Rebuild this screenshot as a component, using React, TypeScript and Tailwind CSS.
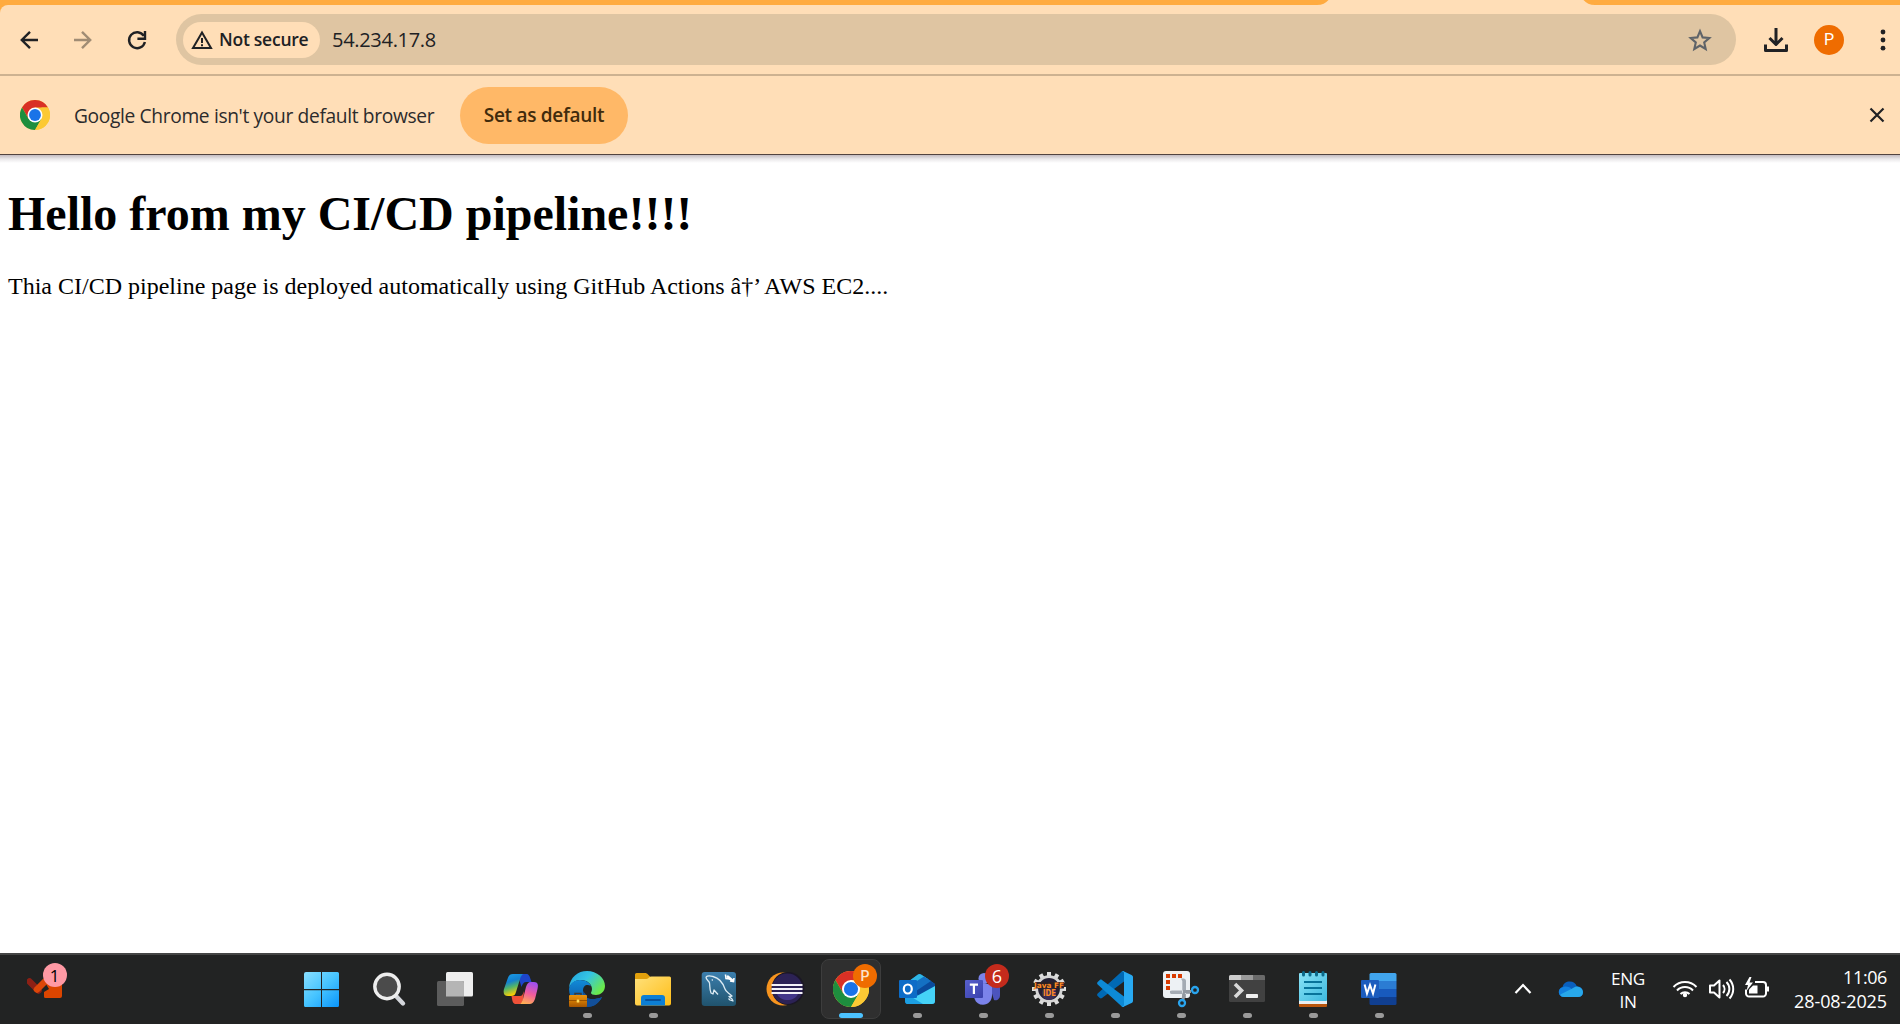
import type { ReactNode } from "react";

function Icon({ children, dot = false, className = "" }: { children: ReactNode; dot?: boolean; className?: string }) {
  return (
    <div className={"relative flex h-[60px] w-[60px] shrink-0 flex-col items-center rounded-lg pt-3 " + className}>
      <svg width="36" height="36" viewBox="0 0 36 36" className="overflow-visible">
        {children}
      </svg>
      {dot && <div className="mt-[6px] h-[5px] w-[9px] rounded-full bg-[#9a9a9a]" />}
    </div>
  );
}

function ChromeMark({ size }: { size: number }) {
  return (
    <svg width={size} height={size} viewBox="0 0 36 36">
      <ChromeShape />
    </svg>
  );
}

function ChromeShape() {
  return (
    <g>
      <circle cx="18" cy="18" r="18" fill="#fcc934" />
      <path d="M18 9h15.59A18 18 0 0 0 2.41 9L10.2 22.5Z" fill="#d93025" />
      <path d="M2.41 9A18 18 0 0 0 18 36l7.8-13.5L18 18 10.2 22.5Z" fill="#1e8e3e" />
      <path d="M33.59 9A18 18 0 0 1 18 36l7.8-13.5L25.8 9Z" fill="#fcc934" />
      <circle cx="18" cy="18" r="9" fill="#fff" />
      <circle cx="18" cy="18" r="7.1" fill="#1a73e8" />
    </g>
  );
}

function Toolbar() {
  return (
    <div className="flex h-[69px] items-center rounded-tl-lg bg-[#ffdeb7]">
      <svg width="176" height="69" viewBox="0 0 176 69" fill="none" strokeWidth="2.4" className="shrink-0">
        <path d="M38 35H22M30 26.800l-8.200 8.200 8.200 8.200" stroke="#202124" />
        <path d="M74 35h16M82 26.800l8.200 8.200-8.200 8.200" stroke="#a08c74" />
        <path d="M143.800 30.800A8 8 0 1 0 144.900 37M145 26v7.700h-7.600" stroke="#202124" />
      </svg>
      <div className="flex h-[51px] w-[1560px] shrink-0 items-center rounded-full bg-[#dfc5a2] pl-[7px]">
        <div className="flex h-9 w-[137px] items-center rounded-full bg-[#ffdeb7] pl-2">
          <svg width="22" height="20" viewBox="0 0 22 20" fill="none" stroke="#202124" strokeWidth="2">
            <path d="M11 2.500 2 18h18Z" />
            <path d="M11 8v5M11 14.200v2" />
          </svg>
          <span className="ml-[6px] text-[17.5px] leading-none font-semibold tracking-[-0.25px] whitespace-nowrap text-[#202124]">Not secure</span>
        </div>
        <span className="ml-[12px] text-[20px] leading-none tracking-[-0.3px] text-[#202124]">54.234.17.8</span>
        <svg width="26" height="26" viewBox="0 0 26 26" fill="none" stroke="#5f6368" strokeWidth="2.1" className="mr-[23px] ml-auto">
          <path d="M13 4.200l2.600 6.200 6.700.600-5.100 4.400 1.500 6.600-5.700-3.500-5.700 3.500 1.500-6.600-5.100-4.400 6.700-.600Z" />
        </svg>
      </div>
      <svg width="26" height="26" viewBox="0 0 26 26" fill="none" stroke="#202124" strokeWidth="3" className="ml-[27px]">
        <path d="M13 1v16M6.500 11l6.500 6.500 6.500-6.500M2.500 17.500V23.500h21V17.500" strokeLinejoin="round" />
      </svg>
      <div className="ml-[25px] flex h-[30px] w-[30px] items-center justify-center rounded-full bg-[#ef6c00] font-[Roboto] text-[16px] text-white">P</div>
      <svg width="10" height="30" viewBox="0 0 10 30" className="ml-[34px]" fill="#202124">
        <circle cx="5" cy="7" r="2.400" />
        <circle cx="5" cy="15" r="2.400" />
        <circle cx="5" cy="23.200" r="2.400" />
      </svg>
    </div>
  );
}

function InfoBar() {
  return (
    <div className="relative flex h-[81px] shrink-0 items-center border-t-2 border-b border-t-[#cdb291] border-b-[#51433f] bg-[#ffdeb7] pl-5">
      <ChromeMark size={30} />
      <span className="mt-[2px] ml-6 w-[386px] text-[19.2px] tracking-[-0.35px] whitespace-nowrap text-[#2c2b2c]">Google Chrome isn't your default browser</span>
      <div className="flex h-[57px] w-[168px] items-center justify-center rounded-full bg-[#ffb867] pt-px text-[19px] font-semibold tracking-[-0.3px] whitespace-nowrap text-[#412b0c]">
        Set as default
      </div>
      <svg width="16" height="16" viewBox="0 0 16 16" stroke="#202124" strokeWidth="2.2" className="mr-[15px] ml-auto">
        <path d="M1.500 1.500l13 13M14.500 1.500l-13 13" />
      </svg>
      <div className="absolute top-full left-0 mt-px h-[8px] w-full bg-linear-to-b from-[#c3bcc1] via-[#eae8ea] to-white" />
    </div>
  );
}

function Gradients() {
  return (
    <svg width="0" height="0" className="absolute">
      <defs>
        <linearGradient id="win" gradientUnits="userSpaceOnUse" x1="0" y1="0" x2="34" y2="36">
          <stop stopColor="#89dfff" /><stop offset=".5" stopColor="#46c4ff" /><stop offset="1" stopColor="#0a95fb" />
        </linearGradient>
        <linearGradient id="cpA" x1="0" y1="0" x2=".3" y2="1">
          <stop stopColor="#1ba0ea" /><stop offset=".4" stopColor="#1480cf" /><stop offset=".65" stopColor="#52b46a" /><stop offset="1" stopColor="#ffd000" />
        </linearGradient>
        <linearGradient id="cpB" x1=".6" y1="0" x2=".3" y2="1">
          <stop stopColor="#a050ee" /><stop offset=".5" stopColor="#f25c9c" /><stop offset="1" stopColor="#ffb152" />
        </linearGradient>
        <linearGradient id="edge" x1="0" y1="0" x2="1" y2=".6">
          <stop stopColor="#1f9fdd" /><stop offset=".5" stopColor="#35c5e4" /><stop offset="1" stopColor="#6be94a" />
        </linearGradient>
        <linearGradient id="edgeB" x1="0" y1="0" x2="0" y2="1">
          <stop stopColor="#118bd8" /><stop offset="1" stopColor="#0b4c9b" />
        </linearGradient>
        <linearGradient id="folder" x1="0" y1="0" x2="1" y2="1">
          <stop stopColor="#ffe17b" /><stop offset="1" stopColor="#ffbd17" />
        </linearGradient>
        <linearGradient id="sql" x1="0" y1="0" x2="0" y2="1">
          <stop stopColor="#3c7fae" /><stop offset="1" stopColor="#20536d" />
        </linearGradient>
        <linearGradient id="teams" x1="0" y1="0" x2="1" y2="1">
          <stop stopColor="#5860cc" /><stop offset="1" stopColor="#3940ac" />
        </linearGradient>
        <linearGradient id="note" x1="0" y1="0" x2="1" y2="1">
          <stop stopColor="#8ae3f6" /><stop offset="1" stopColor="#3db9df" />
        </linearGradient>
        <linearGradient id="briefcase" x1="0" y1="0" x2="0" y2="1">
          <stop stopColor="#e9920d" /><stop offset=".45" stopColor="#d27c04" /><stop offset="1" stopColor="#a55500" />
        </linearGradient>
      </defs>
    </svg>
  );
}

const teeth = [0, 30, 60, 90, 120, 150, 180, 210, 240, 270, 300, 330];

function Apps() {
  return (
    <div className="ml-[218px] flex gap-[6px] pt-1">
      <Icon>
        <g fill="url(#win)">
          <path d="M1 1h15v17H-1V3a2 2 0 0 1 2-2ZM17 1h15.500a1.500 1.500 0 0 1 1.500 1.500V18H17ZM-1 19.200h17V36H.5A1.500 1.500 0 0 1-1 34.500ZM17 19.200h17v15.300a1.500 1.500 0 0 1-1.500 1.500H17Z" />
        </g>
      </Icon>
      <Icon>
        <path d="M25 25l7 7.500" stroke="#d3d5da" strokeWidth="4.400" strokeLinecap="round" />
        <circle cx="16" cy="15.500" r="12.200" fill="#4b4b4b" stroke="#eeeeee" strokeWidth="3.400" />
      </Icon>
      <Icon>
        <rect x="9" y="1" width="27" height="24.500" rx="1.500" fill="#eeeeee" />
        <rect x="0" y="10" width="27" height="25" rx="1.500" fill="#5c5c5c" />
        <path d="M9 10h16.500a1.500 1.500 0 0 1 1.500 1.500v14H9Z" fill="#b5b5b5" />
      </Icon>
      <Icon>
        <path d="M16 3h7c3 0 3.500 2 4.500 5l1 3h-5c-3 0-4 2-5 5L16 8Z" fill="#1d45cb" />
        <path d="M11 25h6c2 0 3-2 4-5l-1 9c-1 3-1 4-4 4h-3c-3 0-3.500-2-4.500-8Z" fill="#ef5138" />
        <path d="M10 3h11c-2 0-3 2-4 5l-4 13c-1 3-2 4-5 4H5c-4 0-5-3-4-7L4.500 8C6 4 7 3 10 3Z" fill="url(#cpA)" />
        <path d="M26 33H16c2 0 3-2 4-5l3-12c1-3 2-5 5-5h3c4 0 4.500 3 3.500 7L32 28c-1.500 4-3 5-6 5Z" fill="url(#cpB)" />
      </Icon>
      <Icon dot>
        <path d="M0 17C1 6 9 0 18 0c10 0 18 7 18 15 0 6-5 9-9 9-3 0-5-1-5-2 0-1 1-2 1-4 0-5-5-9-11-9C6 9 2 12 0 17Z" fill="url(#edge)" />
        <path d="M0 18C1 12 6 9 11 9c6 0 10 3 11 6-4-2-8-1-8 5 0 6 6 9 12 8 3-.5 5-1 7-2-3 6-8 10-15 10C8 36 0 28 0 18Z" fill="url(#edgeB)" />
        <path d="M14 20c0 6 6 9 12 8 3-.500 5-1 7-2-3 6-8 10-15 10V25Z" fill="#124f99" />
        <path d="M6 24v-1.500h6V24" fill="none" stroke="#3b3b3b" strokeWidth="1.500" />
        <rect x="0" y="24" width="18" height="12" rx="1" fill="url(#briefcase)" />
        <path d="M0 29.500h18" stroke="#8a4700" strokeWidth=".8" />
        <rect x="7.700" y="28.500" width="2.600" height="3" rx=".5" fill="#ffd95a" />
      </Icon>
      <Icon dot>
        <path d="M0 3.500A1.500 1.500 0 0 1 1.500 2H10c1.500 0 2 .5 3 1.500L15.500 6 10 12H0Z" fill="#e2a00c" />
        <path d="M0 8h10c2 0 3-.500 4-1.500.700-.700 1.500-1 2.500-1h18A1.500 1.500 0 0 1 36 7v25.500a2 2 0 0 1-2 2H2a2 2 0 0 1-2-2Z" fill="url(#folder)" />
        <path d="M6 34.500V27a3 3 0 0 1 3-3h18a3 3 0 0 1 3 3v7.500Z" fill="#0c7fd5" />
        <path d="M11 29h14" stroke="#07519b" strokeWidth="2" strokeLinecap="round" />
      </Icon>
      <Icon>
        <rect x=".700" y="1" width="34.300" height="34" rx="3" fill="url(#sql)" />
        <path d="M5 6c2-2 5-1 7-.500C18 7 22 12 24 18c.500 2 2 3 4 4.500l3 2.500-3 .500 3 2.500 1 2-3-1-1.500-1.500M5 6c0 3 3 4 3.500 6 .5 3 0 7 1.500 10l2 1 1-4 4 4.500" fill="none" stroke="#dcebf3" strokeWidth="1.300" strokeLinejoin="round" />
        <circle cx="11.300" cy="9" r=".7" fill="#fff" />
        <path d="M26 5l6 5" stroke="#fff" strokeWidth="2.600" />
        <path d="M24.500 3.500l.5 4 4 .5M29 10l3.500.5.500-3.500" fill="none" stroke="#fff" strokeWidth="1.600" />
      </Icon>
      <Icon>
        <circle cx="16" cy="18" r="16.500" fill="#f7941e" />
        <circle cx="21" cy="17.500" r="16.500" fill="#1b1726" />
        <circle cx="20.300" cy="17.700" r="15.300" fill="#2c2255" />
        <path d="M10 23h21c-2 4-6 6-10.500 6S12 27 10 23Z" fill="#43368a" />
        <path d="M4.500 14h31M4.500 18h31M4.500 22h31" stroke="#f4f2f8" strokeWidth="2" />
      </Icon>
      <div className="relative flex h-[60px] w-[60px] flex-col items-center rounded-lg border border-[#3d3d3d] bg-[#2f2f2f] pt-[11px]">
        <ChromeMark size={36} />
        <div className="mt-[6px] h-[5px] w-6 shrink-0 rounded-full bg-[#4cc2ff]" />
        <div className="absolute top-1 left-[31px] flex h-6 w-6 items-center justify-center rounded-full bg-[#ef6c00] font-[Roboto] text-[14px] font-medium text-[#fbe2cd]">P</div>
      </div>
      <Icon dot>
        <path d="M6 13 19 3.500c1-.700 2-.700 3 0L36 13v17a3 3 0 0 1-3 3H9a3 3 0 0 1-3-3Z" fill="#0f6cbd" />
        <path d="M6 13 19 3.500c1-.700 2-.700 3 0l7 4.500-17 13-6-4Z" fill="#2fb7e5" />
        <path d="M29 8l7 5v4L22 25l-10-4Z" fill="#0a4a9c" />
        <path d="M25 5.500l7 4.500-18 12-4-7Z" fill="#1470c3" />
        <path d="M36 15v15a3 3 0 0 1-3 3H9c-1 0-2-1-2-2Z" fill="#45d2f7" />
        <path d="M6 22l18 11H9a3 3 0 0 1-3-3Z" fill="#1c9fe3" />
        <rect x="0" y="9" width="18" height="18" rx="1" fill="#0d6cc7" />
        <ellipse cx="8.800" cy="18" rx="4" ry="4.500" fill="none" stroke="#fff" strokeWidth="2.200" />
      </Icon>
      <div className="relative">
        <Icon dot>
          <circle cx="30" cy="9" r="4" fill="#4d55b9" />
          <path d="M24 13h11v11c0 4-3 6-6 5Z" fill="#4c54bd" />
          <circle cx="19" cy="7.500" r="5.500" fill="#7b83eb" />
          <path d="M10 13h17v11c0 6-4 9.700-9 9.700-4 0-7-2-8.500-6Z" fill="#7b83eb" />
          <rect x="0" y="9" width="18" height="18" rx="1" fill="url(#teams)" />
          <path d="M4.800 13.700h8.200M8.900 13v10" stroke="#fff" strokeWidth="2.200" />
        </Icon>
        <div className="absolute top-[5px] left-[32px] flex h-6 w-6 items-center justify-center rounded-full bg-[#c42b1c] text-[18px] leading-none text-white">6</div>
      </div>
      <Icon dot>
        {teeth.map((a) => (
          <rect key={a} x="16" y="1" width="4" height="6" fill="#dddddd" transform={`rotate(${a} 18 18)`} />
        ))}
        <circle cx="18" cy="18" r="12.300" fill="#242032" stroke="#d5d5d5" strokeWidth="2.800" />
        <circle cx="18" cy="22" r="7" fill="#3a2d58" />
        <rect x="4" y="11" width="29" height="6.500" fill="#2b2024" />
        <g fill="#ff8a24" fontFamily="DejaVu Sans" fontWeight="700" textAnchor="middle">
          <text x="18" y="16.500" fontSize="7.400" textLength="30" lengthAdjust="spacingAndGlyphs">Java FF</text>
          <text x="18.500" y="24.700" fontSize="8.500" textLength="13" lengthAdjust="spacingAndGlyphs">IDE</text>
        </g>
      </Icon>
      <Icon dot>
        <path d="M27 0v10.500L5 27c-.800.600-1.500.500-2.200 0L.7 25c-.800-.800-.700-1.700 0-2.500L24.500.800C25.300.100 26 0 27 0Z" fill="#0069b4" />
        <path d="M27 36V25.500L5 9c-.800-.600-1.500-.500-2.200 0L.7 11c-.800.800-.700 1.700 0 2.500l23.800 21.700c.8.700 1.500.8 2.500.8Z" fill="#0d8ad6" />
        <path d="M26 0l8.500 4c1 .500 1.500 1.200 1.500 2.300v23.400c0 1.100-.500 1.800-1.500 2.300L26 36c-1 0-1.500-.200-2-.700 1.200.9 3 0 3-1.500V2.200C27 .700 25.200-.200 24 .700c.5-.500 1-.700 2-.700Z" fill="#28a9f1" />
      </Icon>
      <Icon dot>
        <rect x="0" y="0" width="27" height="27" rx="3" fill="#edf1f4" />
        <path d="M3 3h4v4H3ZM9 3h4v4H9ZM15 3h4v4h-4ZM3 9h4v4H3ZM3 15h4v4H3Z" fill="#d83b01" />
        <path d="M18 7.500h2.500c1.500 0 2.500 1 2.500 2.500v17h-3.700V10ZM7 20v1.500C7 22.500 8 23 9.500 23H27v-3.500H9Z" fill="#a5acb4" />
        <path d="M20 20.500l8 0M21 22l-1 7" stroke="#9299a1" strokeWidth="3" />
        <circle cx="32" cy="19" r="3" fill="none" stroke="#29a4ee" strokeWidth="2.300" />
        <circle cx="19" cy="32" r="3" fill="none" stroke="#29a4ee" strokeWidth="2.300" />
      </Icon>
      <Icon dot>
        <rect x="0" y="4" width="36" height="27" rx="1.500" fill="#414141" />
        <path d="M1.500 4H12v5H0V5.500A1.500 1.500 0 0 1 1.500 4Z" fill="#cccccc" />
        <path d="M12 4h12v5H12Z" fill="#9a9a9a" />
        <path d="M24 4h10.500A1.500 1.500 0 0 1 36 5.500V9H24Z" fill="#6a6a6a" />
        <path d="M6 13l6.500 6.500L6 26" fill="none" stroke="#d9d9d9" strokeWidth="3.600" />
        <rect x="17" y="23" width="12" height="4" rx=".8" fill="#f0f0f0" />
      </Icon>
      <Icon dot>
        <rect x="4" y="30" width="28" height="6" rx="1" fill="#b9560e" />
        <rect x="4" y="28" width="28" height="5" fill="#e9eef1" />
        <rect x="4" y="2" width="28" height="28" rx="1" fill="url(#note)" />
        <path d="M9 11h18M9 17h18M9 23h18" stroke="#08739a" strokeWidth="1.800" />
        <path d="M8.500 1.500v2.500M15 1.500v2.500M21.500 1.500v2.500M28 1.500v2.500" stroke="#0b6b8c" strokeWidth="3" strokeLinecap="round" />
      </Icon>
      <Icon dot>
        <path d="M10 2h24a1.500 1.500 0 0 1 1.500 1.500V10H8.500V3.500A1.500 1.500 0 0 1 10 2Z" fill="#41a5ee" />
        <path d="M8.500 10h27v8h-27Z" fill="#2b7cd3" />
        <path d="M8.500 18h27v8h-27Z" fill="#185abd" />
        <path d="M8.500 26h27v6.500A1.500 1.500 0 0 1 34 34H10a1.500 1.500 0 0 1-1.500-1.500Z" fill="#103f91" />
        <rect x="0" y="9" width="18" height="18" rx="1" fill="#1b5cbe" />
        <path d="M3.600 13.500l2.400 9 3-8.500 3 8.500 2.400-9" fill="none" stroke="#fff" strokeWidth="2" />
      </Icon>
    </div>
  );
}

function Tray() {
  return (
    <div className="mr-[13px] ml-auto flex items-start pt-[10px] text-[18px] leading-6 text-white">
      <svg width="74" height="30" viewBox="1513 974 74 30" fill="none" className="mt-[9px] shrink-0">
        <path d="M1515.500 993l7.500-8 7.500 8" stroke="#fff" strokeWidth="2.200" />
        <path d="M1564 997a5 5 0 0 1-1.500-9.800c.7-3.700 3.600-5.700 7.300-5.700 3.300 0 6 2 7 4.700 3.700.2 6.200 2.700 6.200 6 0 3-2 4.800-5 4.800Z" fill="#0a5fbd" />
        <path d="M1564 997a5 5 0 0 1-.500-10c3-1 5.500 0 7.500 1.300l4 8.700Z" fill="#1180df" />
        <path d="M1560.300 994.500l11-5.500c2-1 4-3 6.500-2.300 3 .4 5.200 2.600 5.200 5.500 0 3-2 4.800-5 4.800h-14c-1.600 0-3-.800-3.700-2.500Z" fill="#28a8ea" />
      </svg>
      <div className="mt-[2px] ml-[17px] w-12 text-center text-[17.2px] leading-[23px] tracking-[-0.4px]">ENG<br />IN</div>
      <svg width="100" height="30" viewBox="1672 974 100 30" fill="none" stroke="#fff" className="mt-[9px] ml-5 shrink-0">
        <g strokeWidth="2">
          <path d="M1673.500 987a16 16 0 0 1 23 0M1677 990.500a11 11 0 0 1 16 0M1680.500 994a6.500 6.500 0 0 1 9 0" />
          <circle cx="1685" cy="995" r="1.200" fill="#fff" />
          <path d="M1710 985.500h4l5.500-5v17l-5.500-5h-4Z" strokeLinejoin="round" />
          <path d="M1723 985a6 6 0 0 1 0 8M1726.500 982a10 10 0 0 1 0 14M1729.500 979.500a14 14 0 0 1 0 19" />
          <path d="M1755 982h8a3 3 0 0 1 3 3v8.500a3 3 0 0 1-3 3h-14a3 3 0 0 1-3-3v-4" />
        </g>
        <path d="M1766.500 986.500h2.500v5h-2.500Z" fill="#fff" stroke="none" />
        <path d="M1749 993.500v-4l4-4h4.500v8Z" fill="#fff" stroke="none" />
        <path d="M1749.500 977l-4.500 8h3l-1.500 6 6.500-8.500h-3.500l2-5.500Z" fill="#fff" stroke="none" />
      </svg>
      <div className="w-[115px] text-right tracking-[-0.1px] whitespace-nowrap">
        <div className="tracking-[-0.4px]">11:06</div>
        <div>28-08-2025</div>
      </div>
    </div>
  );
}

function Taskbar() {
  return (
    <div className="flex h-[71px] shrink-0 items-start border-t-2 border-[#454545] bg-[#222323]">
      <Gradients />
      <div className="relative h-full w-[75px] shrink-0">
        <svg width="36" height="24" viewBox="27 977 36 24" className="mt-[22px] ml-[27px]">
          <path d="M29.500 981.500l9 9" stroke="#8d2015" strokeWidth="6.500" strokeLinecap="round" />
          <path d="M37 989.500l8-8" stroke="#dc4609" strokeWidth="6.500" strokeLinecap="round" />
          <path d="M43 979l6 10-5 3v4.500a1.500 1.500 0 0 0 1.500 1.500H60a2 2 0 0 0 2-2v-15Z" fill="#dc4500" />
        </svg>
        <div className="absolute top-2 left-[42.500px] flex h-6 w-6 items-center justify-center rounded-full bg-[#ff99a4] text-[17px] leading-none text-black">1</div>
      </div>
      <Apps />
      <Tray />
    </div>
  );
}

export default function App() {
  return (
    <div className="flex h-[1024px] w-[1900px] flex-col overflow-hidden bg-white font-['Open_Sans','Noto_Sans',sans-serif]">
      <div className="h-[5px] shrink-0 bg-[#ffab40]">
        <svg width="1900" height="5" viewBox="0 0 1900 5" className="block">
          <path d="M1317 5c5 0 9-2 11.500-5h255c2.500 3 6.500 5 11.500 5Z" fill="#ffdeb7" />
        </svg>
      </div>
      <div className="shrink-0 bg-[#ffab40]">
        <Toolbar />
      </div>
      <InfoBar />
      <main className="flex-1 px-2 font-['Liberation_Serif',serif] text-black">
        <h1 className="mt-[31px] text-[48px] leading-[55px] font-bold">Hello from my CI/CD pipeline!!!!</h1>
        <p className="mt-[31px] text-[24px] leading-[28px]">Thia CI/CD pipeline page is deployed automatically using GitHub Actions â†’ AWS EC2....</p>
      </main>
      <Taskbar />
    </div>
  );
}
